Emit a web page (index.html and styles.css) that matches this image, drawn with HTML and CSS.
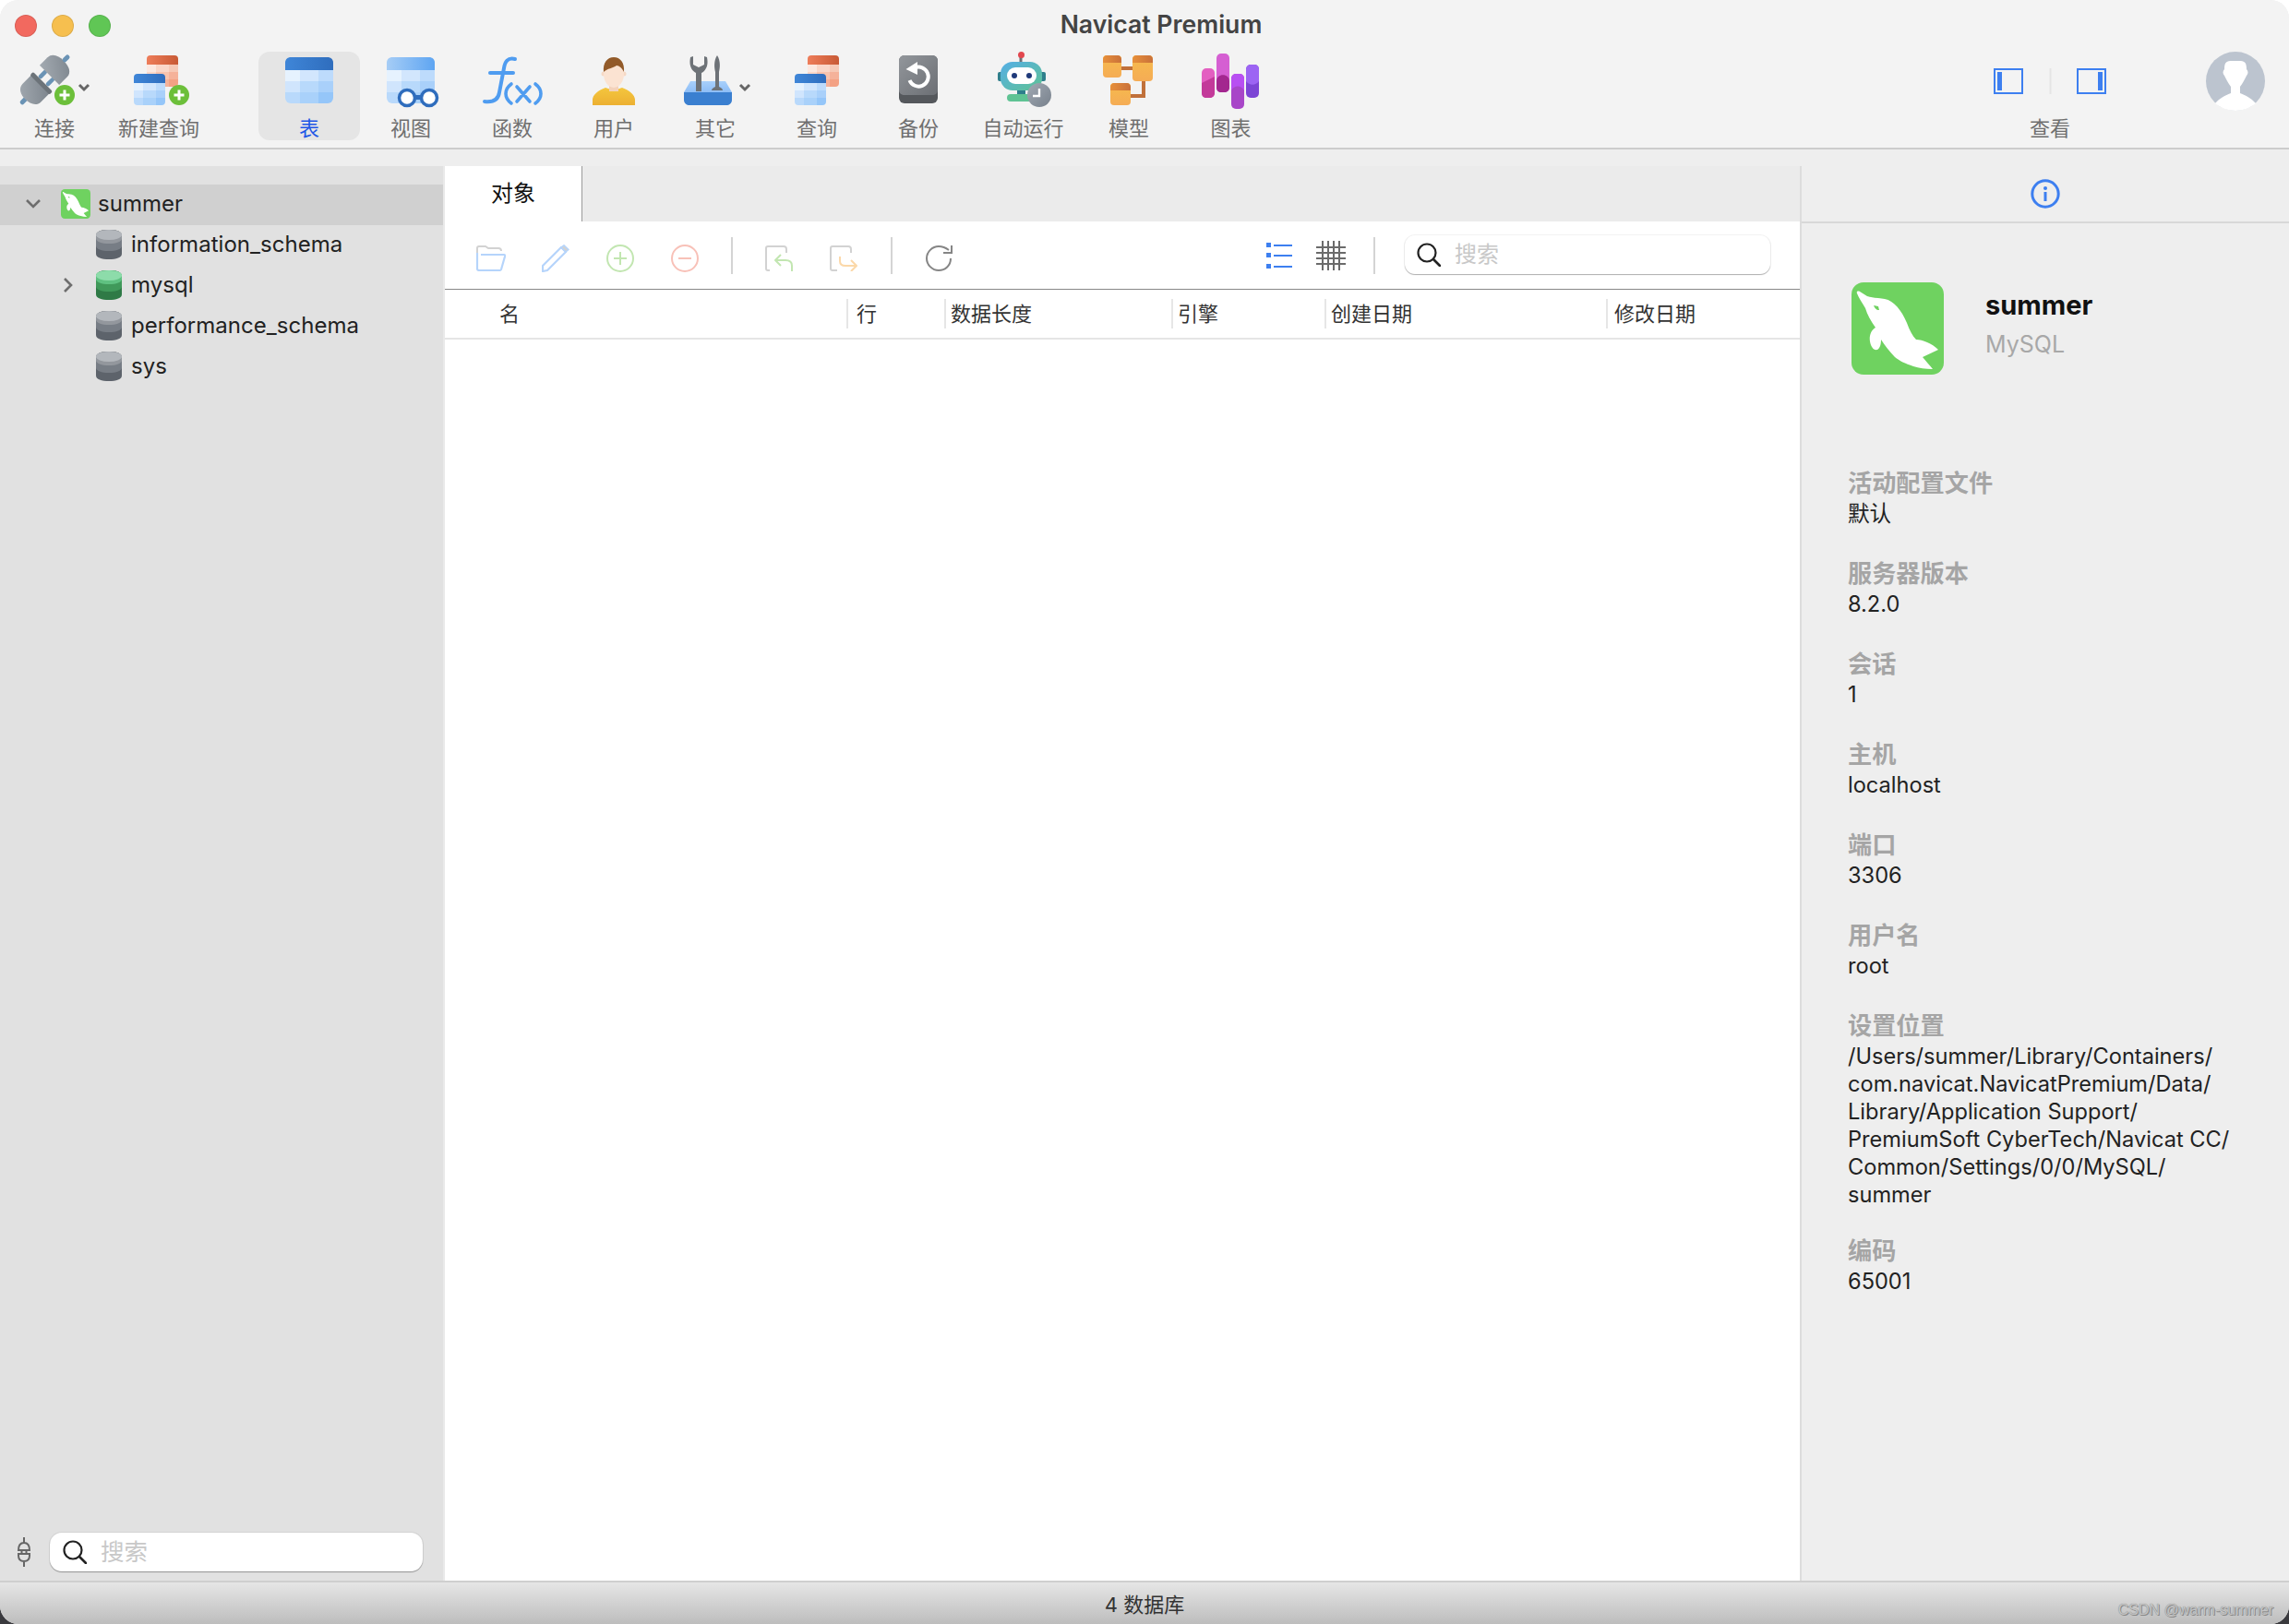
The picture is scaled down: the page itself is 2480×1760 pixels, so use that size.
FILE: index.html
```html
<!DOCTYPE html>
<html lang="zh-CN">
<head>
<meta charset="utf-8">
<title>Navicat Premium</title>
<link rel="stylesheet" href="styles.css">
</head>
<body>
<svg class="defs" width="0" height="0" aria-hidden="true">
  <defs>
    <linearGradient id="gBlueHead" x1="0" y1="0" x2="1" y2="0"><stop offset="0" stop-color="#3f86d8"/><stop offset="1" stop-color="#2f6dbd"/></linearGradient>
    <linearGradient id="gViewHead" x1="0" y1="0" x2="1" y2="0"><stop offset="0" stop-color="#a6cdf6"/><stop offset="1" stop-color="#5ea5f2"/></linearGradient>
    <linearGradient id="gRedHead" x1="0" y1="0" x2="1" y2="0"><stop offset="0" stop-color="#ee7d5a"/><stop offset="1" stop-color="#c85a35"/></linearGradient>
    <linearGradient id="gUser" x1="0" y1="0" x2="0" y2="1"><stop offset="0" stop-color="#f4c63e"/><stop offset="1" stop-color="#ecb032"/></linearGradient>
    <linearGradient id="gPlug" x1="0" y1="0" x2="1" y2="1"><stop offset="0" stop-color="#a3aab1"/><stop offset="1" stop-color="#7d858d"/></linearGradient>
    <linearGradient id="gTray" x1="0" y1="0" x2="0" y2="1"><stop offset="0" stop-color="#a8d0fb"/><stop offset="1" stop-color="#8dbdf6"/></linearGradient>
    <linearGradient id="gBackup" x1="0" y1="0" x2="1" y2="1"><stop offset="0" stop-color="#92969b"/><stop offset="1" stop-color="#6c6f74"/></linearGradient>
    <linearGradient id="gRobot" x1="0" y1="0" x2="1" y2="1"><stop offset="0" stop-color="#55aee6"/><stop offset="1" stop-color="#5fc394"/></linearGradient>
    <linearGradient id="gClock" x1="0" y1="0" x2="1" y2="1"><stop offset="0" stop-color="#a1a9b3"/><stop offset="1" stop-color="#78818c"/></linearGradient>
    <linearGradient id="gBlock" x1="0" y1="0" x2="0" y2="1"><stop offset="0" stop-color="#f6bb4c"/><stop offset="1" stop-color="#f5ac55"/></linearGradient>
    <linearGradient id="gBlockHead" x1="0" y1="0" x2="1" y2="0"><stop offset="0" stop-color="#e78f3a"/><stop offset="1" stop-color="#c9713a"/></linearGradient>
    <clipPath id="cBig"><rect width="52" height="50" rx="6"/></clipPath>
    <clipPath id="cSmall"><rect width="34" height="34" rx="4"/></clipPath>
    <symbol id="bigCells" viewBox="0 0 52 50">
      <g clip-path="url(#cBig)">
        <rect x="0" y="14" width="16" height="12" fill="#e6f2fe"/><rect x="16" y="14" width="20" height="12" fill="#d2e6fd"/><rect x="36" y="14" width="16" height="12" fill="#bddbfc"/>
        <rect x="0" y="26" width="16" height="12" fill="#d0e5fd"/><rect x="16" y="26" width="20" height="12" fill="#b8d9fb"/><rect x="36" y="26" width="16" height="12" fill="#a9d0fa"/>
        <rect x="0" y="38" width="16" height="12" fill="#b9d9fb"/><rect x="16" y="38" width="20" height="12" fill="#a9d1fa"/><rect x="36" y="38" width="16" height="12" fill="#95c6f9"/>
      </g>
    </symbol>
    <symbol id="smallBlue" viewBox="0 0 34 34">
      <g clip-path="url(#cSmall)">
        <rect width="34" height="10" fill="url(#gBlueHead)"/>
        <rect x="0" y="10" width="10" height="8" fill="#e6f2fe"/><rect x="10" y="10" width="14" height="8" fill="#d2e6fd"/><rect x="24" y="10" width="10" height="8" fill="#bddbfc"/>
        <rect x="0" y="18" width="10" height="8" fill="#d0e5fd"/><rect x="10" y="18" width="14" height="8" fill="#b8d9fb"/><rect x="24" y="18" width="10" height="8" fill="#a9d0fa"/>
        <rect x="0" y="26" width="10" height="8" fill="#b9d9fb"/><rect x="10" y="26" width="14" height="8" fill="#a9d1fa"/><rect x="24" y="26" width="10" height="8" fill="#95c6f9"/>
      </g>
    </symbol>
    <symbol id="smallRed" viewBox="0 0 34 34">
      <g clip-path="url(#cSmall)">
        <rect width="34" height="10" fill="url(#gRedHead)"/>
        <rect x="0" y="10" width="10" height="8" fill="#fce8e0"/><rect x="10" y="10" width="14" height="8" fill="#fad7c9"/><rect x="24" y="10" width="10" height="8" fill="#f6c9b6"/>
        <rect x="0" y="18" width="10" height="8" fill="#fad7c9"/><rect x="10" y="18" width="14" height="8" fill="#f8c3ae"/><rect x="24" y="18" width="10" height="8" fill="#f5b29a"/>
        <rect x="0" y="26" width="10" height="8" fill="#f8c3ae"/><rect x="10" y="26" width="14" height="8" fill="#f5b29a"/><rect x="24" y="26" width="10" height="8" fill="#f3a184"/>
      </g>
    </symbol>
    <symbol id="dolphin" viewBox="0 0 100 100">
      <rect width="100" height="100" rx="13" fill="#6fd260"/>
      <path fill="#fff" d="M6 12C5 10 7 9 9 10L17 15C23 17 29 17 36 18C46 20 54 30 60 44C63 52 66 58 70 62C77 62 87 66 94 73L77 81C81 86 85 90 88 94C80 94 73 93 67 91C58 88 52 85 47 81C41 75 36 68 32 62C32 67 31 71 28 73C24 74 21 70 20 64C19 58 21 52 26 49C21 42 17 35 15 28C12 23 8 17 6 12Z"/>
      <path fill="#6fd260" d="M24 25L29 26L30 30C27 30 25 28 24 25Z"/>
    </symbol>
    <symbol id="dbGrey" viewBox="0 0 28 32">
      <path fill="#5d636b" d="M0 6C0 2 6 0 14 0S28 2 28 6V26C28 30 22 32 14 32S0 30 0 26Z"/>
      <path fill="#777d85" d="M0 6C0 2 6 0 14 0S28 2 28 6V17C28 21 22 23 14 23S0 21 0 17Z"/>
      <path fill="#93979d" d="M0 6C0 2 6 0 14 0S28 2 28 6V9C28 13 22 15 14 15S0 13 0 9Z"/>
      <ellipse cx="14" cy="5.500" rx="14" ry="5.500" fill="#b3b7bc"/>
    </symbol>
    <symbol id="dbGreen" viewBox="0 0 28 32">
      <path fill="#2f7a46" d="M0 6C0 2 6 0 14 0S28 2 28 6V26C28 30 22 32 14 32S0 30 0 26Z"/>
      <path fill="#40995a" d="M0 6C0 2 6 0 14 0S28 2 28 6V17C28 21 22 23 14 23S0 21 0 17Z"/>
      <path fill="#5fc181" d="M0 6C0 2 6 0 14 0S28 2 28 6V9C28 13 22 15 14 15S0 13 0 9Z"/>
      <ellipse cx="14" cy="5.500" rx="14" ry="5.500" fill="#8ddcaa"/>
    </symbol>
    <symbol id="lens" viewBox="0 0 26 26">
      <circle cx="11" cy="11" r="9.500" fill="none" stroke="#222" stroke-width="2.200"/>
      <path d="M18 18L25 25" stroke="#222" stroke-width="2.600" stroke-linecap="round"/>
    </symbol>
  </defs>
</svg>

<div class="window">
  <header class="toolbar">
    <div class="titlerow">
      <div class="lights"><span class="light red"></span><span class="light yellow"></span><span class="light green"></span></div>
      <div class="title">Navicat Premium</div>
    </div>
    <div class="tools">
      <div class="tool w118">
        <svg class="ticon" width="118" height="68" viewBox="0 56 118 68">
          <g transform="translate(38 97) rotate(-45)">
            <rect x="-22" y="-2.500" width="12" height="5" rx="2.500" fill="#6a93b5"/>
            <rect x="12" y="-8" width="11" height="4.500" rx="2" fill="#6a93b5"/>
            <rect x="12" y="3.500" width="11" height="4.500" rx="2" fill="#6a93b5"/>
            <path d="M9 -14H-5C-12 -14 -15 -7 -15 0S-12 14 -5 14H9Z" fill="url(#gPlug)"/>
            <rect x="7" y="-15" width="5" height="30" rx="2" fill="#6c7379"/>
            <path d="M22 -15H34C41 -15 44 -8 44 0S41 15 34 15H22Z" fill="url(#gPlug)"/>
            <rect x="43" y="-2.500" width="9" height="5" rx="2.500" fill="#6a93b5"/>
          </g>
          <circle cx="70" cy="103" r="11" fill="#6cbf3a"/>
          <path d="M70 97.500V108.500M64.500 103H75.500" stroke="#fff" stroke-width="3"/>
          <path d="M86 92L91 97L96 92" class="chev"/>
        </svg>
        <span class="tlabel">连接</span>
      </div>
      <div class="tool w108 mr54">
        <svg class="ticon" width="108" height="68" viewBox="118 56 108 68">
          <use href="#smallRed" x="159" y="60" width="34" height="34"/>
          <use href="#smallBlue" x="145" y="80" width="34" height="34"/>
          <circle cx="194" cy="103" r="11" fill="#6cbf3a"/>
          <path d="M194 97.500V108.500M188.500 103H199.500" stroke="#fff" stroke-width="3"/>
        </svg>
        <span class="tlabel">新建查询</span>
      </div>
      <div class="tool w110 active">
        <svg class="ticon" width="110" height="68" viewBox="280 56 110 68">
          <use href="#bigCells" x="309" y="62" width="52" height="50"/>
          <path d="M309 76V68C309 64 312 62 315 62H355C358 62 361 64 361 68V76Z" fill="url(#gBlueHead)"/>
        </svg>
        <span class="tlabel">表</span>
      </div>
      <div class="tool w110">
        <svg class="ticon" width="110" height="68" viewBox="390 56 110 68">
          <use href="#bigCells" x="419" y="62" width="52" height="50"/>
          <path d="M419 76V68C419 64 422 62 425 62H465C468 62 471 64 471 68V76Z" fill="url(#gViewHead)"/>
          <rect x="448" y="103" width="8" height="5" fill="#2f6dbd"/>
          <circle cx="441" cy="106" r="8.500" fill="#fff" stroke="#2f6dbd" stroke-width="3.500"/>
          <circle cx="465" cy="106" r="8.500" fill="#fff" stroke="#2f6dbd" stroke-width="3.500"/>
        </svg>
        <span class="tlabel">视图</span>
      </div>
      <div class="tool w110">
        <svg class="ticon" width="110" height="68" viewBox="500 56 110 68">
          <g fill="none" stroke="#4f9cf0" stroke-linecap="round">
            <path stroke-width="4" d="M558 64C550 62 547 67 546 74L541 100C540 108 534 111 525 110"/>
            <path stroke-width="4" d="M531 79H556"/>
            <path stroke-width="3.600" d="M554 91C546 97 546 106 554 112M580 91C588 97 588 106 580 112M560 94L574 110M574 94L560 110"/>
          </g>
        </svg>
        <span class="tlabel">函数</span>
      </div>
      <div class="tool w110">
        <svg class="ticon" width="110" height="68" viewBox="610 56 110 68">
          <path d="M642 114V108C642 103 648 98 656 95L665 98L674 95C682 98 688 103 688 108V114Z" fill="url(#gUser)"/>
          <rect x="660" y="88" width="10" height="11" fill="#f3d2bb"/>
          <circle cx="654" cy="80" r="2.500" fill="#f6d9c5"/><circle cx="676" cy="80" r="2.500" fill="#f6d9c5"/>
          <ellipse cx="665" cy="80" rx="11" ry="15" fill="#fbe3d2"/>
          <path d="M654 78C653 68 658 62 665 62S677 68 676 78C674 74 671 71 668 71C664 74 658 74 654 78Z" fill="#925a29"/>
        </svg>
        <span class="tlabel">用户</span>
      </div>
      <div class="tool w110">
        <svg class="ticon" width="110" height="68" viewBox="720 56 110 68">
          <path d="M741 100L748 88H786L793 100Z" fill="url(#gTray)"/>
          <path d="M741 100H793V108C793 112 790 114 787 114H747C744 114 741 112 741 108Z" fill="#3a7fd0"/>
          <path d="M748 62C746 72 750 77 754 79V99H760V79C764 77 768 72 766 62L763 61V70L757 73L751 70V61Z" fill="#6d7277"/>
          <path d="M777 60C773 66 774 74 775 78V94C772 95 771 97 771 98H783C783 97 782 95 779 94V78C780 74 781 66 777 60Z" fill="#6d7277"/>
          <path d="M802 92L807 97L812 92" class="chev"/>
        </svg>
        <span class="tlabel">其它</span>
      </div>
      <div class="tool w110">
        <svg class="ticon" width="110" height="68" viewBox="830 56 110 68">
          <use href="#smallRed" x="875" y="60" width="34" height="34"/>
          <use href="#smallBlue" x="861" y="80" width="34" height="34"/>
        </svg>
        <span class="tlabel">查询</span>
      </div>
      <div class="tool w110">
        <svg class="ticon" width="110" height="68" viewBox="940 56 110 68">
          <rect x="974" y="60" width="42" height="52" rx="6" fill="#55585c"/>
          <path d="M974 66C974 62 977 60 980 60H1010C1013 60 1016 62 1016 66V98C1016 101 1013 103 1010 103H980C977 103 974 101 974 98Z" fill="url(#gBackup)"/>
          <path d="M991 73.500A10.500 10.500 0 1 1 985.500 87" fill="none" stroke="#fff" stroke-width="4"/>
          <path d="M994 67V81L981.500 75Z" fill="#fff"/>
        </svg>
        <span class="tlabel">备份</span>
      </div>
      <div class="tool w117">
        <svg class="ticon" width="116" height="68" viewBox="1050 56 116 68">
          <rect x="1103.500" y="60" width="3" height="8" fill="#6b7177"/>
          <circle cx="1105.500" cy="59.500" r="3.500" fill="#e2474e"/>
          <rect x="1080" y="78" width="6" height="10" rx="2" fill="#2f7f8c"/><rect x="1125" y="78" width="7" height="10" rx="2" fill="#2f7f8c"/>
          <rect x="1101" y="96" width="9" height="8" fill="#2f7f8c"/>
          <rect x="1090" y="102" width="32" height="8" rx="4" fill="#5fc394"/>
          <rect x="1083" y="67" width="45" height="31" rx="13" fill="url(#gRobot)"/>
          <rect x="1090" y="73" width="32" height="18" rx="9" fill="#fff"/>
          <circle cx="1098" cy="82" r="3" fill="#1f3a7a"/><circle cx="1114" cy="82" r="3" fill="#1f3a7a"/>
          <circle cx="1125" cy="103" r="13" fill="url(#gClock)"/>
          <path d="M1125 96V104H1118" fill="none" stroke="#fff" stroke-width="2.400"/>
        </svg>
        <span class="tlabel">自动运行</span>
      </div>
      <div class="tool w112">
        <svg class="ticon" width="112" height="68" viewBox="1167 56 112 68">
          <path d="M1215 74H1227M1239 88V104H1225" fill="none" stroke="#c0703a" stroke-width="4"/>
          <rect x="1195" y="60" width="20" height="24" rx="4" fill="url(#gBlock)"/><path d="M1195 68V64C1195 62 1197 60 1199 60H1211C1213 60 1215 62 1215 64V68Z" fill="url(#gBlockHead)"/>
          <rect x="1227" y="60" width="22" height="28" rx="4" fill="url(#gBlock)"/><path d="M1227 68V64C1227 62 1229 60 1231 60H1245C1247 60 1249 62 1249 64V68Z" fill="url(#gBlockHead)"/>
          <rect x="1203" y="90" width="22" height="24" rx="4" fill="url(#gBlock)"/><path d="M1203 98V94C1203 92 1205 90 1207 90H1221C1223 90 1225 92 1225 94V98Z" fill="url(#gBlockHead)"/>
        </svg>
        <span class="tlabel">模型</span>
      </div>
      <div class="tool w109">
        <svg class="ticon" width="109" height="68" viewBox="1279 56 109 68">
          <rect x="1302" y="74" width="14" height="32" rx="5" fill="#e35fc1"/>
          <path d="M1302 90L1316 83V101C1316 104 1313 106 1311 106H1307C1304 106 1302 104 1302 101Z" fill="#c33a9a"/>
          <rect x="1318" y="58" width="14" height="42" rx="5" fill="#d55fd2"/>
          <path d="M1318 88C1318 79 1332 79 1332 88V95C1332 98 1329 100 1327 100H1323C1320 100 1318 98 1318 95Z" fill="#a3278f"/>
          <rect x="1334" y="80" width="14" height="38" rx="5" fill="#a846c8"/>
          <path d="M1334 85C1334 82 1337 80 1339 80H1343C1346 80 1348 82 1348 85V98C1345 92 1337 92 1334 98Z" fill="#b84ff2"/>
          <rect x="1350" y="70" width="14" height="36" rx="5" fill="#7c45d5"/>
          <path d="M1350 75C1350 72 1353 70 1355 70H1359C1362 70 1364 72 1364 75V88C1360 93 1354 93 1350 88Z" fill="#9c64f3"/>
        </svg>
        <span class="tlabel">图表</span>
      </div>
      <div class="tool viewTool">
        <svg class="ticon" width="130" height="68" viewBox="2156 56 130 68">
          <rect x="2161" y="75" width="30" height="26" fill="none" stroke="#3d7ff0" stroke-width="2"/>
          <rect x="2164" y="78" width="5" height="20" fill="#3d7ff0"/>
          <rect x="2220.500" y="74" width="2" height="28" fill="#e5e5e5"/>
          <rect x="2251" y="75" width="30" height="26" fill="none" stroke="#3d7ff0" stroke-width="2"/>
          <rect x="2273" y="78" width="5" height="20" fill="#3d7ff0"/>
        </svg>
        <span class="tlabel">查看</span>
      </div>
      <svg class="avatar" width="64" height="64" viewBox="0 0 64 64">
        <circle cx="32" cy="32" r="32" fill="#bcc4cf"/>
        <path d="M10 56C15 50 22 47 27 45V38C24 34 22 30 20 26C18 24 18 21 20 19C20 9 24 10 32 10S44 9 44 19C46 21 46 24 44 26C42 30 40 34 37 38V45C42 47 49 50 54 56C48 61 40 64 32 64S16 61 10 56Z" fill="#fff"/>
      </svg>
    </div>
  </header>

  <div class="strip"></div>

  <div class="body">
    <aside class="sidebar">
      <ul class="tree">
        <li class="row selected">
          <svg class="twist" width="16" height="10" viewBox="0 0 16 10"><path d="M1 1L8 8L15 1" class="twistline"/></svg>
          <svg class="conn" width="32" height="32"><use href="#dolphin"/></svg>
          <span class="rowtext">summer</span>
        </li>
        <li class="row child">
          <svg class="db" width="28" height="32"><use href="#dbGrey"/></svg>
          <span class="rowtext">information_schema</span>
        </li>
        <li class="row childopen">
          <svg class="twistr" width="10" height="16" viewBox="0 0 10 16"><path d="M1 1L8 8L1 15" class="twistline"/></svg>
          <svg class="db" width="28" height="32"><use href="#dbGreen"/></svg>
          <span class="rowtext">mysql</span>
        </li>
        <li class="row child">
          <svg class="db" width="28" height="32"><use href="#dbGrey"/></svg>
          <span class="rowtext">performance_schema</span>
        </li>
        <li class="row child">
          <svg class="db" width="28" height="32"><use href="#dbGrey"/></svg>
          <span class="rowtext">sys</span>
        </li>
      </ul>
      <div class="sidefoot">
        <svg class="plugmini" width="14" height="32" viewBox="0 0 14 32" fill="none" stroke="#666" stroke-width="2">
          <path d="M7 0V6M1 14C1 9 3 6 7 6S13 9 13 14ZM1 18H13V20C13 24 11 26 7 26S1 24 1 20ZM4.500 14V18M9.500 14V18M7 26V32"/>
        </svg>
        <div class="searchbox side">
          <svg class="lens" width="26" height="26"><use href="#lens"/></svg>
          <span class="placeholder">搜索</span>
        </div>
      </div>
    </aside>

    <main class="main">
      <div class="tabbar"><div class="tab">对象</div></div>
      <div class="objbar">
        <div class="ti">
          <svg width="32" height="28" viewBox="0 0 32 28" fill="none">
            <path d="M1 8V3C1 2 2 1 3 1H10L13 3H24C26 3 27 4 27 6" stroke="#d2d2d2" stroke-width="2"/>
            <path d="M5 10H30C31 10 31.500 11 31 12L27 26C26.800 26.600 26 27 25 27H3C1.500 27 1 26 1 25V8" stroke="#b5d4fb" stroke-width="2.200" stroke-linejoin="round"/>
          </svg>
        </div>
        <div class="ti">
          <svg width="30" height="30" viewBox="0 0 30 30" fill="none" stroke-linejoin="round">
            <path d="M1 23L21 3L26 8L6 28L1 29Z" stroke="#b5d4fb" stroke-width="2.200"/>
            <path d="M21 3L24 0.800L29 5.500L26 8Z" fill="#d2d2d2" stroke="#b5d4fb" stroke-width="1.500"/>
          </svg>
        </div>
        <div class="ti">
          <svg width="30" height="30" viewBox="0 0 30 30" fill="none" stroke="#c2e6b1" stroke-width="2">
            <circle cx="15" cy="15" r="14"/><path d="M15 8V22M8 15H22"/>
          </svg>
        </div>
        <div class="ti">
          <svg width="30" height="30" viewBox="0 0 30 30" fill="none" stroke="#f8c1b8" stroke-width="2">
            <circle cx="15" cy="15" r="14"/><path d="M8 15H22"/>
          </svg>
        </div>
        <span class="vsep s1"></span>
        <div class="ti t1">
          <svg width="30" height="28" viewBox="0 0 30 28" fill="none" stroke-width="2">
            <path d="M5 27H3C2 27 1 26 1 25V3C1 2 2 1 3 1H20C22 1 23 2 23 4V8" stroke="#d2d2d2"/>
            <path d="M29 28V22C29 18 26 16 22 16H12M17 10L11 16L17 22" stroke="#c2e6b1" stroke-linejoin="round"/>
          </svg>
        </div>
        <div class="ti">
          <svg width="30" height="28" viewBox="0 0 30 28" fill="none" stroke-width="2">
            <path d="M23 8V4C23 2 22 1 20 1H3C2 1 1 2 1 3V25C1 26 2 27 3 27H8" stroke="#d2d2d2"/>
            <path d="M11 12V17C11 20 13 22 17 22H28M23 16L29 22L23 28" stroke="#fbd8a9" stroke-linejoin="round"/>
          </svg>
        </div>
        <span class="vsep s2"></span>
        <div class="ti t1">
          <svg width="30" height="28" viewBox="0 0 30 28" fill="none" stroke="#858585" stroke-width="2">
            <path d="M28 14C28 22 22 27 15 27S2 21 2 14S8 1 15 1C19 1 22 2 26 5"/>
            <path d="M29 0V8H20"/>
          </svg>
        </div>
        <div class="barright">
          <svg width="28" height="28" viewBox="0 0 28 28" fill="#3d7ff0">
            <rect y="0" width="5" height="5"/><rect x="8" y="2" width="20" height="2"/>
            <rect y="11" width="5" height="5"/><rect x="8" y="13" width="20" height="2"/>
            <rect y="23" width="5" height="5"/><rect x="8" y="25" width="20" height="2"/>
          </svg>
          <svg width="32" height="32" viewBox="0 0 32 32" stroke="#6b6b6b" stroke-width="2" fill="none">
            <path d="M0 7H32M0 13H32M0 19H32M0 25H32M7 0V32M13 0V32M19 0V32M25 0V32"/>
          </svg>
          <span class="vsep"></span>
          <div class="searchbox top">
            <svg class="lens" width="26" height="26"><use href="#lens"/></svg>
            <span class="placeholder">搜索</span>
          </div>
        </div>
      </div>
      <div class="thead">
        <div class="th first">名</div>
        <div class="th">行</div>
        <div class="th">数据长度</div>
        <div class="th">引擎</div>
        <div class="th">创建日期</div>
        <div class="th">修改日期</div>
      </div>
      <div class="tbody"></div>
    </main>

    <aside class="panel">
      <div class="panelhead">
        <svg width="32" height="32" viewBox="0 0 32 32"><circle cx="16" cy="16" r="14.200" fill="none" stroke="#3d7ff0" stroke-width="3"/><rect x="14.500" y="14" width="3" height="10" fill="#3d7ff0"/><circle cx="16" cy="10" r="2" fill="#3d7ff0"/></svg>
      </div>
      <div class="panelbody">
        <div class="identity">
          <svg width="100" height="100"><use href="#dolphin"/></svg>
          <div class="idtext">
            <div class="idname">summer</div>
            <div class="idtype">MySQL</div>
          </div>
        </div>
        <dl class="props">
          <div class="prop"><dt>活动配置文件</dt><dd>默认</dd></div>
          <div class="prop"><dt>服务器版本</dt><dd>8.2.0</dd></div>
          <div class="prop"><dt>会话</dt><dd>1</dd></div>
          <div class="prop"><dt>主机</dt><dd>localhost</dd></div>
          <div class="prop"><dt>端口</dt><dd>3306</dd></div>
          <div class="prop"><dt>用户名</dt><dd>root</dd></div>
          <div class="prop multi"><dt>设置位置</dt><dd>/Users/summer/Library/Containers/<br>com.navicat.NavicatPremium/Data/<br>Library/Application Support/<br>PremiumSoft CyberTech/Navicat CC/<br>Common/Settings/0/0/MySQL/<br>summer</dd></div>
          <div class="prop"><dt>编码</dt><dd>65001</dd></div>
        </dl>
      </div>
    </aside>
  </div>

  <footer class="status">
    <span>4 数据库</span>
    <span class="watermark">CSDN @warm-summer</span>
  </footer>
</div>
</body>
</html>
```

FILE: styles.css
```css
* { box-sizing: border-box; }
html { background: linear-gradient(#ffffff 50%, #3a3a3e 50%); }
body { margin: 0; font-family: Inter, "Noto Sans CJK SC", sans-serif; color: #222; }
.defs { position: absolute; }

.window { width: 2480px; height: 1760px; display: flex; flex-direction: column; border-radius: 20px; overflow: hidden; background: #eee; position: relative; }

/* toolbar */
.toolbar { height: 162px; flex: none; background: #f3f3f3; border-bottom: 2px solid #cccccc; }
.titlerow { height: 56px; display: flex; align-items: flex-start; position: relative; }
.lights { display: flex; gap: 16px; padding: 16px 0 0 16px; }
.light { width: 24px; height: 24px; border-radius: 50%; border: 1px solid rgba(0,0,0,.1); }
.red { background: #f2695f; }
.yellow { background: #f6bf4f; }
.green { background: #60c655; }
.title { position: absolute; left: 0; right: 0; top: 10px; padding-left: 36px; text-align: center; font-size: 26.6px; line-height: 32px; font-weight: 600; color: #444; }
.tools { display: flex; align-items: flex-start; position: relative; }
.tool { display: flex; flex-direction: column; align-items: center; height: 96px; border-radius: 12px; flex: none; }
.ticon { display: block; height: 68px; flex: none; overflow: visible; margin-bottom: 2px; }
.tlabel { font-size: 22px; line-height: 26px; color: #6f6f6f; white-space: nowrap; }
.w108 { width: 108px; }
.w109 { width: 109px; }
.w110 { width: 110px; }
.w112 { width: 112px; }
.w117 { width: 117px; }
.w118 { width: 118px; }
.mr54 { margin-right: 54px; }
.active { background: #e5e5e5; }
.active .tlabel { color: #1f57e6; }
.viewTool { width: 130px; margin-left: 768px; }
.avatar { display: block; margin-left: 104px; flex: none; }
.chev { fill: none; stroke: #666; stroke-width: 3; }

.strip { height: 18px; flex: none; background: #eee; }

.body { flex: 1; min-height: 0; display: flex; }

/* sidebar */
.sidebar { width: 482px; flex: none; background: #e1e1e1; border-right: 2px solid #e9e9e9; display: flex; flex-direction: column; padding-top: 20px; }
.tree { list-style: none; margin: 0; padding: 0; flex: 1; }
.row { height: 44px; display: flex; align-items: center; font-size: 24px; color: #222; padding-bottom: 2px; }
.selected { background: #d0d0d0; padding-left: 28px; }
.child { padding-left: 104px; }
.childopen { padding-left: 69px; }
.twist { margin-right: 22px; flex: none; }
.twistr { margin-right: 25px; flex: none; }
.twistline { fill: none; stroke: #6e6e6e; stroke-width: 2.600; }
.conn { margin-right: 8px; flex: none; }
.db { margin-right: 10px; flex: none; }
.rowtext { white-space: nowrap; margin-bottom: 2px; letter-spacing: 0.03px; }
.sidefoot { height: 54px; display: flex; align-items: center; padding: 0 22px 0 19px; margin-bottom: 4px; }
.plugmini { flex: none; margin-right: 21px; }

.searchbox { background: #fff; display: flex; align-items: center; }
.searchbox.side { flex: 1; height: 42px; border-radius: 13px; padding-left: 14px; box-shadow: 0 1px 1px rgba(0,0,0,.3), 0 0 0 1px rgba(0,0,0,.06); }
.searchbox.top { width: 396px; height: 42px; border-radius: 11px; padding-left: 13px; margin-bottom: 2px; box-shadow: 0 1px 1px rgba(0,0,0,.28), 0 0 0 1px rgba(0,0,0,.05); }
.lens { flex: none; margin-right: 15px; }
.placeholder { color: #c8c8c8; font-size: 25.5px; line-height: 30px; }
.top .placeholder { font-size: 24px; }

/* main */
.main { width: 1468px; flex: none; background: #fff; display: flex; flex-direction: column; }
.tabbar { height: 60px; flex: none; background: #ebebeb; display: flex; }
.tab { width: 149px; background: #fff; border-right: 1px solid #9a9a9a; display: flex; align-items: center; justify-content: center; font-size: 24px; color: #111; padding-bottom: 6px; }
.objbar { height: 74px; flex: none; border-bottom: 1px solid #888; display: flex; align-items: center; padding: 0 32px 0 15px; }
.ti { width: 70px; flex: none; display: flex; justify-content: center; align-items: center; margin-top: 6px; }
.ti svg { display: block; }
.ti.t1 { margin-left: 15px; }
.vsep { width: 2px; height: 40px; background: #d4d4d4; flex: none; }
.s1 { margin-left: 15px; }
.s2 { margin-left: 16px; }
.barright { margin-left: auto; display: flex; align-items: center; }
.barright > svg:first-child { margin-right: 26px; }
.barright .vsep { margin: 0 32px 0 30px; }

.thead { height: 54px; flex: none; border-bottom: 2px solid #e5e5e5; display: grid; grid-template-columns: 435px 106px 246px 166px 305px 210px; align-items: center; }
.th { height: 32px; border-left: 2px solid #e6e6e6; padding-left: 5px; font-size: 22px; line-height: 32px; color: #333; white-space: nowrap; }
.th.first { border-left: 0; padding-left: 59px; }
.th:nth-child(2) { padding-left: 9px; }
.th:nth-child(6) { padding-left: 7px; }
.tbody { flex: 1; background: #fff; }

/* right panel */
.panel { flex: 1; min-width: 0; background: #eee; border-left: 2px solid #dcdcdc; display: flex; flex-direction: column; }
.panelhead { height: 62px; flex: none; border-bottom: 2px solid #d8d8d8; display: flex; align-items: center; justify-content: center; }
.panelhead svg { display: block; }
.panelbody { padding: 64px 0 0 50px; }
.identity { display: flex; align-items: flex-start; padding-left: 4px; }
.identity svg { display: block; flex: none; }
.idtext { margin-left: 45px; padding-top: 5px; }
.idname { font-size: 29px; line-height: 40px; font-weight: 700; color: #111; }
.idtype { font-size: 25px; line-height: 44px; color: #a8a8a8; }
.props { margin: 100px 0 0; }
.prop { margin-bottom: 32px; }
.prop.multi { margin-bottom: 28px; }
.prop dt { font-size: 26.2px; line-height: 36px; font-weight: 700; color: #a5a5a5; }
.prop dd { margin: 0; font-size: 23.6px; line-height: 30px; color: #222; white-space: nowrap; }

/* status */
.status { height: 47px; flex: none; position: relative; border-top: 2px solid #cfcfcf; background: linear-gradient(#e6e6e6, #bdbdbd); display: flex; align-items: center; justify-content: center; font-size: 22px; color: #333; padding-bottom: 2px; }
.watermark { position: absolute; right: 17px; bottom: 6px; font-family: "Liberation Sans", sans-serif; font-size: 16px; line-height: 18px; color: #c4c4c4; text-shadow: 1px 1px 0 #888, 0 0 1px #777; }
```
